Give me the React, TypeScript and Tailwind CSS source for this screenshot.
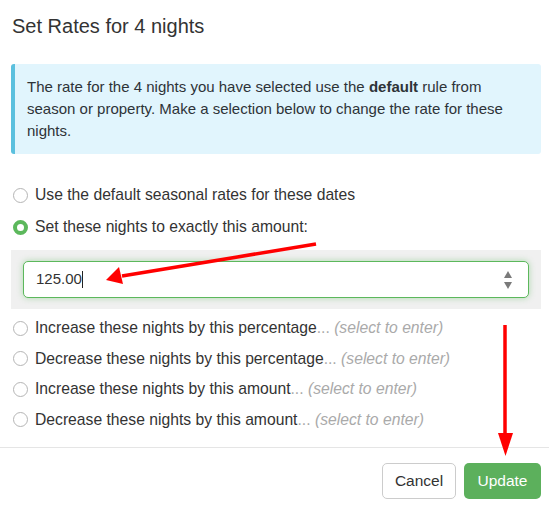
import React from 'react';

const options = [
  'Increase these nights by this percentage',
  'Decrease these nights by this percentage',
  'Increase these nights by this amount',
  'Decrease these nights by this amount',
];

const Radio: React.FC<{ checked?: boolean }> = ({ checked }) =>
  checked ? (
    <span className="w-[15px] h-[15px] rounded-full border-[4px] border-[#5cb85c] bg-white shrink-0" />
  ) : (
    <span className="w-[15px] h-[15px] rounded-full border border-[#b5b5b5] bg-white shrink-0" />
  );

const App: React.FC = () => {
  return (
    <div
      className="relative w-[549px] h-[512px] bg-white text-[#333] overflow-hidden"
      style={{ fontFamily: '"Liberation Sans", Arial, sans-serif' }}
    >
      {/* Header */}
      <div className="pl-[12px] pt-[13px] h-[64px]">
        <h4 className="text-[20px] leading-[26px]">Set Rates for 4 nights</h4>
      </div>

      <div className="pl-[11px] pr-[8px]">
        {/* Info alert */}
        <div className="bg-[#e1f5fd] border-l-[4px] border-[#5bc0de] rounded-[3px] pl-[12px] pr-3 py-3 text-[15px] leading-[22px] text-[#2e3338]">
          The rate for the 4 nights you have selected use the <b>default</b> rule from season or property. Make a
          selection below to change the rate for these nights.
        </div>

        {/* Options */}
        <div className="mt-[26px] text-[15.7px]">
          <label className="flex items-center gap-[7px] pl-[2px] h-[30px]">
            <Radio />
            <span>Use the default seasonal rates for these dates</span>
          </label>
          <label className="flex items-center gap-[7px] pl-[2px] h-[30px] mt-[2px]">
            <Radio checked />
            <span>Set these nights to exactly this amount:</span>
          </label>

          <div className="bg-[#f0f0f0] mt-[8px] px-[12px] py-[11px]">
            <div className="flex items-center h-[37px] bg-white border border-[#5cb85c] rounded-[5px] shadow-[0_0_6px_rgba(92,184,92,0.45)] pl-[12px] pr-[15px] text-[15px]">
              <span className="flex-1 flex items-center">
                125.00<span className="inline-block w-px h-[17px] bg-[#222]" />
              </span>
              <svg width="10" height="22" viewBox="0 0 10 22">
                <path d="M5 2 L9 9 L1 9 Z" fill="#7a7a7a" />
                <path d="M5 20 L9 13 L1 13 Z" fill="#7a7a7a" />
              </svg>
            </div>
          </div>

          <div className="mt-[4px]">
            {options.map((o) => (
              <label key={o} className="flex items-center gap-[7px] pl-[2px] h-[30.5px]">
                <Radio />
                <span>
                  {o}
                  <span className="text-[#aaa]">...</span>{' '}
                  <i className="text-[#aaa]">(select to enter)</i>
                </span>
              </label>
            ))}
          </div>
        </div>
      </div>

      {/* Footer */}
      <div className="border-t border-[#e5e5e5] mt-[12px] pt-[15px] pr-[8px] flex justify-end gap-[8px] text-[15.5px]">
        <button className="h-[36px] w-[74px] border border-[#ccc] rounded-[5px] bg-white text-[#333]">
          Cancel
        </button>
        <button className="h-[36px] w-[77px] rounded-[5px] bg-[#5cb05c] text-white">Update</button>
      </div>

      {/* Annotation arrows */}
      <svg className="absolute inset-0 pointer-events-none" width="549" height="512">
        <line x1="316" y1="244" x2="122" y2="276" stroke="#ff0000" strokeWidth="3.5" />
        <path d="M106 280 L119 267 L123 284 Z" fill="#ff0000" />
        <line x1="505" y1="325" x2="505" y2="436" stroke="#ff0000" strokeWidth="3.5" />
        <path d="M498 433 L513 433 L505.5 456 Z" fill="#ff0000" />
      </svg>
    </div>
  );
};

export default App;
